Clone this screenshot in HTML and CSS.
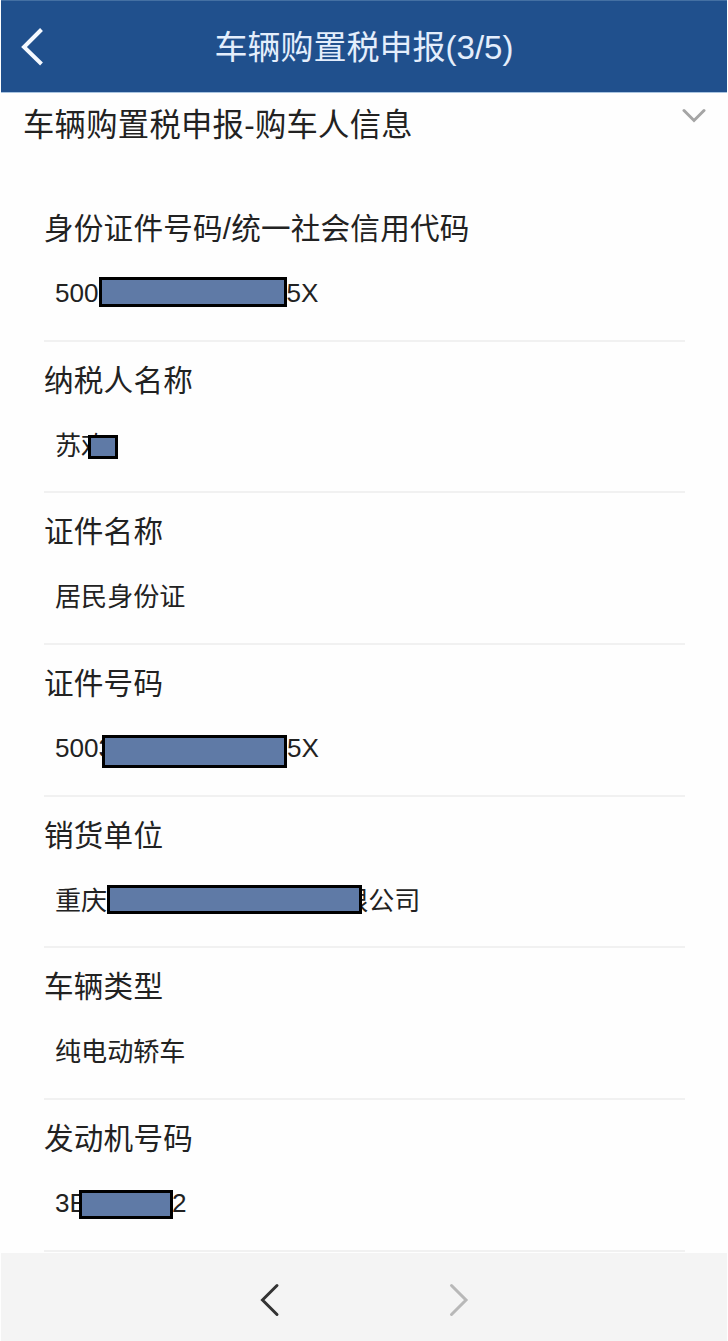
FILE: index.html
```
<!DOCTYPE html>
<html lang="zh-CN">
  <head>
    <title>车辆购置税申报</title>
    <meta charset="utf-8" />
    <meta name="viewport" content="width=device-width, initial-scale=1.0" />

    <link rel="stylesheet" href="styles.css">
  </head>
  <body>
    <header>
      <svg class="back" viewBox="0 0 24 40" width="24" height="40">
        <path d="M20.5 2.5 L3 20 L20.5 37" />
      </svg>
      <h1>车辆购置税申报(3/5)</h1>
    </header>

    <main>
      <div class="section-title">
        <h2>车辆购置税申报-购车人信息</h2>
        <svg class="toggle" viewBox="0 0 24 16" width="24" height="16">
          <path d="M2 2.5 L12 12.5 L22 2.5" />
        </svg>
      </div>

      <dl>
        <div class="row">
          <dt>身份证件号码/统一社会信用代码</dt>
          <dd>500<span class="mask mask-id"></span>5X</dd>
        </div>
        <div class="row">
          <dt>纳税人名称</dt>
          <dd class="text">苏欢<span class="mask mask-name"></span></dd>
        </div>
        <div class="row">
          <dt>证件名称</dt>
          <dd class="text">居民身份证</dd>
        </div>
        <div class="row">
          <dt>证件号码</dt>
          <dd>5003<span class="mask mask-number"></span>5X</dd>
        </div>
        <div class="row">
          <dt>销货单位</dt>
          <dd class="text">重庆<span class="mask mask-company"></span>限公司</dd>
        </div>
        <div class="row">
          <dt>车辆类型</dt>
          <dd class="text">纯电动轿车</dd>
        </div>
        <div class="row">
          <dt>发动机号码</dt>
          <dd>3E<span class="mask mask-engine"></span>2</dd>
        </div>
      </dl>
    </main>

    <footer>
      <svg class="prev" viewBox="0 0 20 34" width="20" height="34">
        <path d="M17 2.5 L2.5 17 L17 31.5" />
      </svg>
      <svg class="next" viewBox="0 0 20 34" width="20" height="34">
        <path d="M2.5 2.5 L17 17 L2.5 31.5" />
      </svg>
    </footer>
  </body>
</html>
```
FILE: styles.css
```
* {
  box-sizing: border-box;
}

body {
  display: flex;
  flex-direction: column;
  height: 1341px;
  margin: 0;
  padding: 0 1px;
  overflow: hidden;
  background-color: #fefefe;
  color: #222;
  font-family: 'Liberation Sans', 'Noto Sans CJK SC', sans-serif;
}

svg {
  display: block;
  fill: none;
  stroke-linecap: round;
}

header {
  display: grid;
  grid-template-columns: 60px 1fr 60px;
  align-items: center;
  height: 93px;
  border-top: 1px solid #4470a3;
  border-bottom: 1px solid #a9c4e0;
  background-color: #20508d;
}

.back {
  margin-left: 20px;
  stroke: #f5f9ff;
  stroke-width: 4;
  stroke-linecap: butt;
}

h1 {
  margin: 2px 0 0;
  color: #e4eefc;
  font-size: 33px;
  font-weight: normal;
  line-height: 48px;
  text-align: center;
}

.section-title {
  display: flex;
  justify-content: space-between;
  height: 97px;
  padding: 7px 21px 0 22px;
}

h2 {
  margin: 2px 0 0;
  font-size: 31.3px;
  font-weight: normal;
  line-height: 48px;
  letter-spacing: 0.3px;
}

.toggle {
  margin-top: 8px;
  stroke: #a5a5a5;
  stroke-width: 3;
}

main {
  height: 1160px;
}

dl {
  margin: 0 42px 0 43px;
}

.row {
  height: 151.67px;
  padding-top: 19px;
  border-bottom: 2px solid #f1f1f1;
}

dt {
  font-size: 29.6px;
  line-height: 40px;
  letter-spacing: 0.2px;
}

dd {
  display: flex;
  align-items: flex-start;
  height: 40px;
  margin: 24px 0 0 11px;
  font-size: 26.1px;
  line-height: 40px;
}

.text {
  line-height: 42px;
}

.mask {
  flex: none;
  z-index: 1;
  border: 3px solid #000;
  background-color: #5f7aa6;
}

.mask-id {
  width: 188px;
  height: 30px;
  margin: 4px 0 0 0;
}

.mask-name {
  width: 30px;
  height: 24px;
  margin: 10px 0 0 -19px;
}

.mask-number {
  width: 185px;
  height: 33px;
  margin: 7px 0 0 -11px;
}

.mask-company {
  width: 255px;
  height: 29px;
  margin: 5px -20px 0 0;
}

.mask-engine {
  width: 94px;
  height: 29px;
  margin: 7px -1px 0 -8px;
}

footer {
  display: flex;
  justify-content: center;
  gap: 169px;
  height: 88px;
  padding-top: 30px;
  background-color: #f4f4f4;
}

.prev {
  stroke: #333;
  stroke-width: 3;
}

.next {
  stroke: #b8b8b8;
  stroke-width: 3;
}
```
